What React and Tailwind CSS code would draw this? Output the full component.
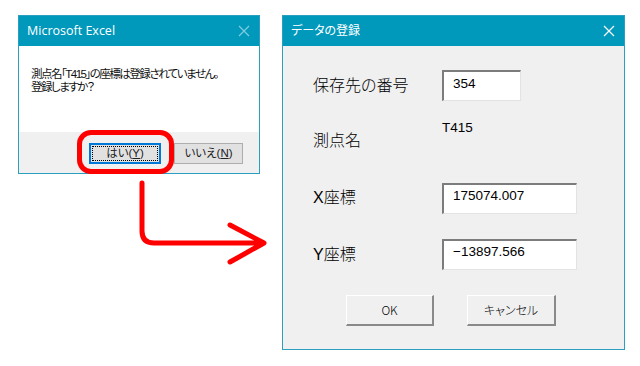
import React from 'react';

const font = "font-['Liberation_Sans','Noto_Sans_CJK_JP',sans-serif]";

function CloseIcon({ color }) {
  return (
    <svg width="12" height="12" viewBox="0 0 12 12" className="block">
      <path d="M1 1 L11 11 M11 1 L1 11" stroke={color} strokeWidth="1.2" fill="none" />
    </svg>
  );
}

function TitleBar({ title, closeColor, pr, textClass }) {
  return (
    <div className={`h-[30px] bg-[#0099bc] flex items-center justify-between pl-[8px] ${pr}`}>
      <span className={`text-white ${textClass}`}>{title}</span>
      <CloseIcon color={closeColor} />
    </div>
  );
}

function SunkenBox({ width, value, pt }) {
  return (
    <div
      className={`h-[31px] bg-white border-t-2 border-l-2 border-t-[#7c7c7c] border-l-[#7c7c7c] border-b border-r border-b-[#e3e3e3] border-r-[#e3e3e3] pl-[9px] ${pt} text-[13.5px] leading-[16px] text-black ${width}`}
    >
      {value}
    </div>
  );
}

function RaisedButton({ label, width }) {
  return (
    <div
      className={`h-[31px] flex items-center justify-center bg-[#f0f0f0] border-t border-l border-t-white border-l-white border-b-2 border-r-2 border-b-[#8a8a8a] border-r-[#8a8a8a] text-[12px] text-black font-light font-['Noto_Sans_CJK_JP',sans-serif] [font-feature-settings:'palt'] ${width}`}
    >
      {label}
    </div>
  );
}

export default function App() {
  return (
    <div className={`relative w-[640px] h-[366px] bg-white overflow-hidden flex gap-[22px] pl-[18px] pt-[15px] ${font}`}>
      {/* left column: confirm dialog + arrow */}
      <div className="flex flex-col w-[242px] shrink-0">
        <div className="w-[242px] h-[159px] border border-[#2a9fc0] flex flex-col">
          <TitleBar
            title="Microsoft Excel"
            closeColor="#7fcce0"
            pr="pr-[9px]"
            textClass="text-[12.5px] font-['Open_Sans',sans-serif]"
          />
          <div className="h-[86px] bg-white pl-[12px] pt-[22px] text-[11.5px] leading-[12.5px] text-[#111] [font-feature-settings:'palt'] tracking-[-1.5px]">
            <div>測点名「T415」の座標は登録されていません。</div>
            <div>登録しますか？</div>
          </div>
          <div className="flex-1 bg-[#f0f0f0] flex justify-end items-start pt-[11px] pr-[16px] gap-[13px]">
            <div className="w-[72px] h-[21px] border-2 border-[#0078d7] bg-[#e1e1e1] p-[1px]">
              <div className="w-full h-full border border-dotted border-black flex items-center justify-center text-[11.5px] text-[#222] [font-feature-settings:'palt']">
                はい(<span className="underline">Y</span>)
              </div>
            </div>
            <div className="w-[69px] h-[21px] border border-[#adadad] bg-[#e1e1e1] flex items-center justify-center text-[11.5px] text-[#222] [font-feature-settings:'palt']">
              いいえ(<span className="underline">N</span>)
            </div>
          </div>
        </div>
        <svg width="260" height="100" viewBox="0 0 260 100" className="block overflow-visible">
          <path
            d="M124 9 L124 57 Q124 69 136 69 L245 69 M212 51 L246 69 L212 88"
            stroke="#ff0000"
            strokeWidth="5"
            fill="none"
            strokeLinecap="round"
            strokeLinejoin="round"
          />
        </svg>
      </div>

      {/* red highlight over the yes button */}
      <div className="absolute left-[77px] top-[130px] w-[97px] h-[44px] border-[5px] border-[#ff0000] rounded-[14px]" />

      {/* right dialog */}
      <div className="w-[343px] h-[335px] shrink-0 border border-[#2a9fc0] flex flex-col">
        <TitleBar
          title="データの登録"
          closeColor="#ffffff"
          pr="pr-[9px]"
          textClass="text-[12px] [font-feature-settings:'palt']"
        />
        <div className="flex-1 bg-[#f0f0f0] flex flex-col pl-[30px] text-black">
          <div className="mt-[24px] h-[31px] flex">
            <div className="w-[129px] pt-[4px] text-[16px] leading-[24px] font-light [font-feature-settings:'palt']">保存先の番号</div>
            <SunkenBox width="w-[79px]" value="354" pt="pt-[4px]" />
          </div>
          <div className="mt-[18px] h-[32px] flex">
            <div className="w-[129px] flex items-end text-[16px] leading-[20px] font-light">測点名</div>
            <div className="pt-[1px] text-[13.5px] leading-[16px]">T415</div>
          </div>
          <div className="mt-[32px] h-[31px] flex">
            <div className="w-[129px] pt-[3px] text-[16px] leading-[24px] font-light [font-feature-settings:'palt']">X座標</div>
            <SunkenBox width="w-[135px]" value="175074.007" pt="pt-[3px]" />
          </div>
          <div className="mt-[25px] h-[31px] flex">
            <div className="w-[129px] pt-[4px] text-[16px] leading-[24px] font-light [font-feature-settings:'palt']">Y座標</div>
            <SunkenBox width="w-[135px]" value="−13897.566" pt="pt-[3px]" />
          </div>
          <div className="mt-[25px] flex gap-[33px] pl-[33px]">
            <RaisedButton label="OK" width="w-[88px]" />
            <RaisedButton label="キャンセル" width="w-[89px]" />
          </div>
        </div>
      </div>
    </div>
  );
}
